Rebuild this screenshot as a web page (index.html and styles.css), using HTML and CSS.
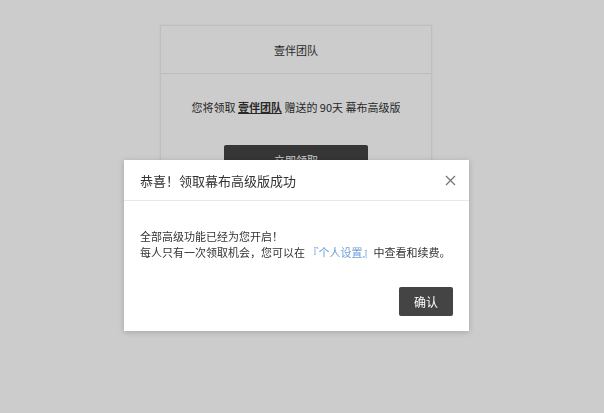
FILE: index.html
```html
<!DOCTYPE html>
<html lang="zh">
<head>
<meta charset="utf-8">
<link rel="stylesheet" href="styles.css">
</head>
<body>
<div class="page">
  <div class="card">
    <div class="card-head">壹伴团队</div>
    <div class="card-body">
      <p class="offer">您将领取 <b class="team">壹伴团队</b> 赠送的 90天 幕布高级版</p>
      <button class="claim">立即领取</button>
    </div>
  </div>
</div>
<div class="mask"></div>
<div class="modal">
  <div class="modal-head">
    <span class="modal-title">恭喜！领取幕布高级版成功</span>
    <svg class="close" width="11" height="11" viewBox="0 0 11 11"><path d="M1 1L10 10M10 1L1 10" stroke="#777" stroke-width="1.3" fill="none"/></svg>
  </div>
  <div class="modal-body">
    <p>全部高级功能已经为您开启！</p>
    <p>每人只有一次领取机会，您可以在 <span class="link">『个人设置』</span>中查看和续费。</p>
  </div>
  <div class="modal-foot">
    <button class="ok">确认</button>
  </div>
</div>
</body>
</html>
```
FILE: styles.css
```css
html, body {
  margin: 0;
  padding: 0;
  background: #fff;
  font-family: "Noto Sans CJK SC", "Noto Sans", sans-serif;
  color: #333;
}
.page {
  padding: 25px 0 0 160px;
}
.card {
  width: 270px;
  border: 1px solid #efefef;
  box-shadow: 0 0 3px rgba(0, 0, 0, 0.06);
  height: 220px;
}
.card-head {
  height: 47px;
  border-bottom: 1px solid #ececec;
  display: flex;
  align-items: center;
  justify-content: center;
  font-size: 11px;
}
.card-body {
  display: flex;
  flex-direction: column;
  align-items: center;
}
.offer {
  margin: 24px 0 0;
  font-size: 11px;
  line-height: 18px;
  white-space: nowrap;
}
.team {
  text-decoration: underline;
  font-weight: bold;
}
.claim {
  margin-top: 29px;
  width: 144px;
  height: 30px;
  background: #444;
  color: #fff;
  border: 0;
  border-radius: 2px;
  font-family: inherit;
  font-size: 11px;
}
.mask {
  position: fixed;
  inset: 0;
  background: rgba(0, 0, 0, 0.2);
}
.modal {
  position: absolute;
  left: 124px;
  top: 160px;
  width: 345px;
  height: 171px;
  background: #fff;
  box-shadow: 0 1px 6px rgba(0, 0, 0, 0.2);
  display: flex;
  flex-direction: column;
}
.modal-head {
  height: 40px;
  border-bottom: 1px solid #e8e8e8;
  display: flex;
  align-items: center;
  justify-content: space-between;
  padding: 0 13px 0 16px;
}
.modal-title {
  font-size: 13px;
  color: #333;
}
.modal-body {
  padding: 27px 16px 0;
  font-size: 11px;
  line-height: 16px;
  color: #333;
  white-space: nowrap;
}
.modal-body p {
  margin: 0;
}
.link {
  color: #6ea1d6;
}
.modal-foot {
  display: flex;
  justify-content: flex-end;
  padding: 27px 16px 0;
}
.ok {
  width: 54px;
  height: 29px;
  background: #444;
  color: #fff;
  border: 0;
  border-radius: 2px;
  font-family: inherit;
  font-size: 12px;
}
```
